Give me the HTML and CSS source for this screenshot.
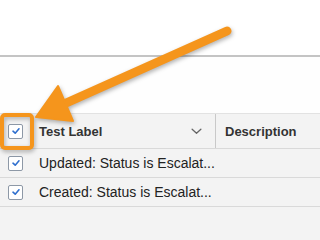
FILE: index.html
```html
<!DOCTYPE html>
<html>
<head>
<meta charset="utf-8">
<link rel="stylesheet" href="styles.css">
</head>
<body>
<div class="page">
  <div class="top"></div>
  <div class="gap"></div>
  <div class="table">
    <div class="row head">
      <div class="cell check"><span class="cb"><svg viewBox="0 0 10 10"><path d="M2 5.2 L4.2 7.2 L8 2.8"/></svg></span></div>
      <div class="cell label">Test Label<svg class="chev" viewBox="0 0 12 8"><path d="M1 1.5 L6 6 L11 1.5"/></svg></div>
      <div class="cell desc">Description</div>
    </div>
    <div class="row">
      <div class="cell check"><span class="cb"><svg viewBox="0 0 10 10"><path d="M2 5.2 L4.2 7.2 L8 2.8"/></svg></span></div>
      <div class="cell label text">Updated: Status is Escalat...</div>
    </div>
    <div class="row">
      <div class="cell check"><span class="cb"><svg viewBox="0 0 10 10"><path d="M2 5.2 L4.2 7.2 L8 2.8"/></svg></span></div>
      <div class="cell label text">Created: Status is Escalat...</div>
    </div>
  </div>
</div>
<svg class="annot" width="320" height="240" viewBox="0 0 320 240">
  <rect x="2" y="115" width="30" height="33" rx="3" ry="3" fill="none" stroke="#f5951c" stroke-width="4"/>
  <path d="M227 31 L55 108" stroke="#f5951c" stroke-width="9" stroke-linecap="round" fill="none"/>
  <polygon points="36,117 58,86 73,121" fill="#f5951c" stroke="#f5951c" stroke-width="2" stroke-linejoin="round"/>
</svg>
</body>
</html>
```
FILE: styles.css
```css
html, body {
  margin: 0;
  padding: 0;
  background: #ffffff;
  font-family: "Liberation Sans", Arial, sans-serif;
  width: 320px;
  height: 240px;
  overflow: hidden;
}
.page {
  display: flex;
  flex-direction: column;
  height: 240px;
}
.top {
  height: 55px;
  border-bottom: 2px solid #c4c4c4;
  flex: none;
}
.gap {
  height: 56px;
  flex: none;
  background: #fefefe;
}
.table {
  flex: 1;
  background: #f3f3f3;
  border-top: 1px solid #e2e2e2;
}
.row {
  display: flex;
  align-items: center;
  height: 28px;
  border-bottom: 1px solid #d9d9d9;
}
.row.head {
  height: 34px;
}
.cell {
  display: flex;
  align-items: center;
  height: 100%;
}
.check {
  width: 31px;
  padding-left: 8px;
  box-sizing: border-box;
}
.cb {
  width: 13px;
  height: 13px;
  background: #ffffff;
  border: 1px solid #8d98a6;
  border-radius: 2px;
  display: flex;
  align-items: center;
  justify-content: center;
}
.cb svg {
  width: 10px;
  height: 10px;
}
.cb path {
  fill: none;
  stroke: #2f6fce;
  stroke-width: 1.6;
  stroke-linecap: round;
  stroke-linejoin: round;
}
.label {
  width: 185px;
  padding-left: 8px;
  box-sizing: border-box;
  font-size: 13px;
  color: #222;
  position: relative;
}
.head .label {
  font-weight: bold;
  color: #333;
  border-right: 1px solid #c9c9c9;
}
.chev {
  width: 11px;
  height: 7px;
  margin-left: auto;
  margin-right: 13px;
}
.chev path {
  fill: none;
  stroke: #666;
  stroke-width: 1.5;
  stroke-linecap: round;
  stroke-linejoin: round;
}
.text {
  white-space: nowrap;
  width: auto;
  font-size: 14px;
}
.desc {
  padding-left: 9px;
  font-size: 13px;
  font-weight: bold;
  color: #333;
}
.annot {
  position: absolute;
  left: 0;
  top: 0;
  filter: drop-shadow(1px 2px 2px rgba(0,0,0,0.3));
}
```
